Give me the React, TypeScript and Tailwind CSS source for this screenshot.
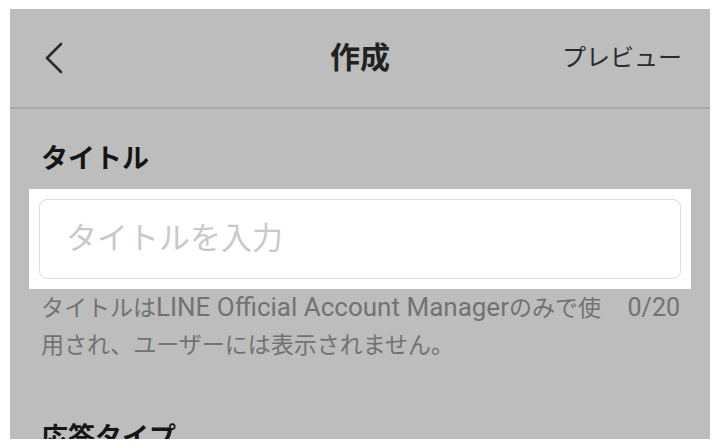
export default function App() {
  return (
    <div
      className="w-[720px] h-[448px] bg-white px-[10px] py-[9px]"
      style={{ fontFamily: "Roboto, 'Noto Sans CJK JP', sans-serif" }}
    >
      <div className="h-full bg-[#bdbdbd] overflow-hidden flex flex-col">
        {/* Header */}
        <div className="h-[100px] shrink-0 grid grid-cols-[1fr_auto_1fr] items-center border-b-2 border-[#aaaaaa]">
          <div className="pl-[34px] flex items-center">
            <svg width="20" height="32" viewBox="0 0 20 32" fill="none">
              <polyline
                points="17,2 3,16 17,30"
                stroke="#2b2b2b"
                strokeWidth="2.6"
                strokeLinecap="round"
                strokeLinejoin="round"
              />
            </svg>
          </div>
          <h1 className="text-[30px] font-bold text-[#222222] leading-none">作成</h1>
          <div className="flex justify-end pr-[28px]">
            <span className="text-[24px] text-[#2a2a2a] leading-none">プレビュー</span>
          </div>
        </div>

        {/* Content */}
        <div className="pt-[30px]">
          <h2 className="px-[31px] text-[27px] font-bold leading-[40px] text-[#151515]">タイトル</h2>

          <div className="mt-[10px] mx-[19px] bg-white p-[10px]">
            <div className="h-[80px] rounded-[8px] border border-[#dedede] flex items-center px-[26px]">
              <span className="text-[31px] text-[#c9c9c9]">タイトルを入力</span>
            </div>
          </div>

          <div className="pl-[31px] pr-[30px] flex items-start text-[23px] leading-[37px] text-[#727272]">
            <p className="w-[564px]">
              タイトルは<span className="text-[26px]">LINE Official Account Manager</span>のみで使用され、ユーザーには表示されません。
            </p>
            <span className="ml-auto shrink-0 text-[25px]">0/20</span>
          </div>

          <h2 className="mt-[54px] px-[31px] text-[27px] font-bold leading-[40px] text-[#151515]">応答タイプ</h2>
        </div>
      </div>
    </div>
  )
}
